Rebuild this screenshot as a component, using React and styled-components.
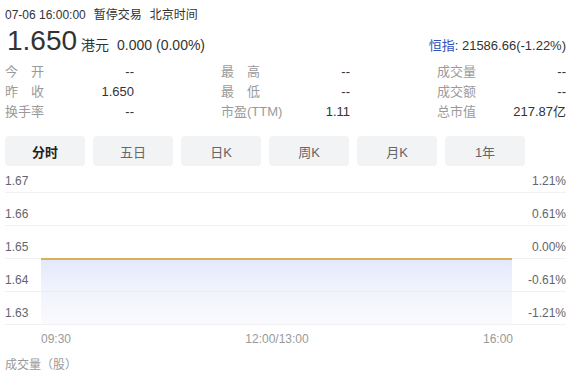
import styled, { createGlobalStyle } from "styled-components";

const GlobalStyle = createGlobalStyle`
  body {
    margin: 0;
    background: #fff;
    font-family: "Liberation Sans", Arial, "Noto Sans CJK SC", sans-serif;
  }
`;

const stats = [
  ["今　开", "--", "最　高", "--", "成交量", "--"],
  ["昨　收", "1.650", "最　低", "--", "成交额", "--"],
  ["换手率", "--", "市盈(TTM)", "1.11", "总市值", "217.87亿"],
];

const tabs = ["分时", "五日", "日K", "周K", "月K", "1年"];

const levels = [
  ["1.67", "1.21%"],
  ["1.66", "0.61%"],
  ["1.65", "0.00%"],
  ["1.64", "-0.61%"],
  ["1.63", "-1.21%"],
];

function App() {
  return (
    <Page>
      <GlobalStyle />
      <Status>
        07-06 16:00:00<Note>暂停交易</Note>
        <Note>北京时间</Note>
      </Status>
      <PriceRow>
        <Price>1.650</Price>
        <Currency>港元</Currency>
        <Change>0.000 (0.00%)</Change>
        <Index>
          <IndexName>恒指</IndexName>: 21586.66(-1.22%)
        </Index>
      </PriceRow>
      <Stats>
        {stats.map((row) =>
          [0, 2, 4].map((i) => (
            <Stat key={row[i]}>
              <Label>{row[i]}</Label>
              <Value>{row[i + 1]}</Value>
            </Stat>
          ))
        )}
      </Stats>
      <Tabs>
        {tabs.map((t, i) => (
          <Tab key={t} $active={i === 0}>
            {t}
          </Tab>
        ))}
      </Tabs>
      <Chart>
        {levels.map(([price, pct], i) => (
          <Band key={price} $first={i === 0}>
            <span>{price}</span>
            <span>{pct}</span>
          </Band>
        ))}
        <Plot viewBox="0 0 471 66" preserveAspectRatio="none">
          <defs>
            <linearGradient id="fill" x1="0" y1="0" x2="0" y2="1">
              <stop offset="0" stopColor="#dde2fa" stopOpacity="0.8" />
              <stop offset="1" stopColor="#eef0fc" stopOpacity="0.3" />
            </linearGradient>
          </defs>
          <rect x="0" y="1" width="471" height="65" fill="url(#fill)" />
          <line x1="0" y1="1" x2="471" y2="1" stroke="#d8b058" strokeWidth="2" />
        </Plot>
      </Chart>
      <Axis>
        <span>09:30</span>
        <span>12:00/13:00</span>
        <span>16:00</span>
      </Axis>
      <Volume>成交量（股）</Volume>
    </Page>
  );
}

export default App;

const Page = styled.div`
  padding: 8px 14px 0 5px;
  color: #333;
`;
const Status = styled.div`
  font-size: 12px;
  line-height: 14px;
  color: #333;
`;
const Note = styled.span`
  margin-left: 8px;
`;
const PriceRow = styled.div`
  display: flex;
  align-items: baseline;
  height: 40px;
  line-height: 38px;
`;
const Price = styled.span`
  font-size: 28px;
  margin-left: 2px;
  color: #333;
`;
const Currency = styled.span`
  font-size: 14px;
  margin-left: 4px;
`;
const Change = styled.span`
  font-size: 14px;
  margin-left: 8px;
`;
const Index = styled.span`
  margin-left: auto;
  font-size: 13px;
`;
const IndexName = styled.span`
  color: #2f4fbd;
`;
const Stats = styled.div`
  display: grid;
  grid-template-columns: repeat(3, 129px);
  column-gap: 87px;
  font-size: 13px;
  line-height: 20px;
`;
const Stat = styled.div`
  display: flex;
  justify-content: space-between;
`;
const Label = styled.span`
  color: #9a9a9a;
`;
const Value = styled.span`
  color: #333;
`;
const Tabs = styled.div`
  display: flex;
  gap: 8px;
  margin-top: 14px;
`;
const Tab = styled.div`
  width: 80px;
  height: 30px;
  display: flex;
  align-items: center;
  justify-content: center;
  border-radius: 4px;
  background: #f2f3f5;
  font-size: 13px;
  color: ${(p) => (p.$active ? "#222" : "#666")};
  font-weight: ${(p) => (p.$active ? "bold" : "normal")};
`;
const Chart = styled.div`
  position: relative;
`;
const Band = styled.div`
  box-sizing: border-box;
  height: ${(p) => (p.$first ? "27px" : "33px")};
  display: flex;
  justify-content: space-between;
  align-items: flex-end;
  padding-bottom: 4px;
  line-height: 14px;
  font-size: 12px;
  color: #62656d;
  border-bottom: 1px solid #f1f1f1;
`;
const Plot = styled.svg`
  position: absolute;
  left: 36px;
  right: 53px;
  bottom: 1px;
  width: 471px;
  height: 66px;
`;
const Axis = styled.div`
  display: flex;
  justify-content: space-between;
  margin: 0 53px 0 36px;
  padding-top: 7px;
  font-size: 12px;
  line-height: 14px;
  color: #999;
`;
const Volume = styled.div`
  margin-top: 12px;
  font-size: 12px;
  line-height: 14px;
  color: #999;
`;
